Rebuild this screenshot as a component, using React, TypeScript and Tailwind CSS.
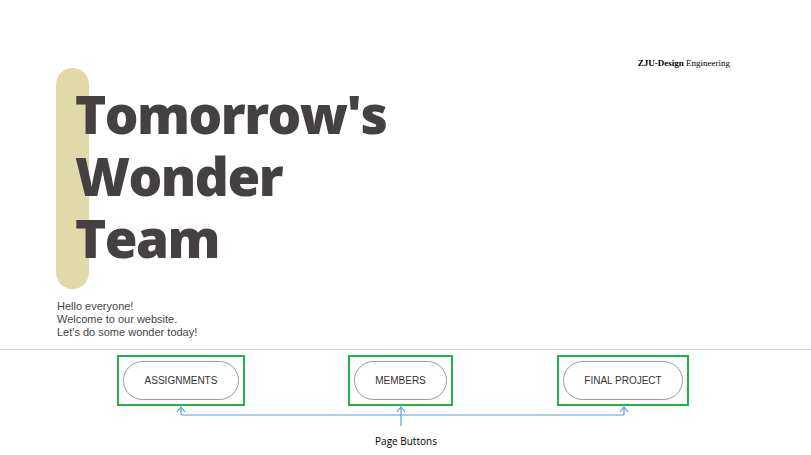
import React from 'react';

const buttons = [
  { label: 'ASSIGNMENTS', pill: 'w-[116px]' },
  { label: 'MEMBERS', pill: 'w-[93px]' },
  { label: 'FINAL PROJECT', pill: 'w-[120px]' },
];

const Arrow: React.FC<{ x: number; bottom: number }> = ({ x, bottom }) => (
  <g>
    <line x1={x} y1={1} x2={x} y2={bottom} />
    <polyline points={`${x - 4},6 ${x},1 ${x + 4},6`} fill="none" />
  </g>
);

const App: React.FC = () => {
  return (
    <div className="w-[811px] h-[455px] bg-white overflow-hidden text-[#454141]">
      <div className="h-[68px] flex items-end justify-end pr-[81px]">
        <p className="text-[9px] leading-[10px] text-black" style={{ fontFamily: '"Liberation Serif", serif' }}>
          <span className="font-bold">ZJU-Design</span> Engineering
        </p>
      </div>

      <div className="relative ml-[56px] h-[221px]">
        <div className="absolute left-0 top-0 w-[33px] h-full rounded-full bg-[#e0d9a8]" />
        <h1
          className="relative pl-[19px] pt-[15px] text-[53px] leading-[62px] font-extrabold text-[#454141] tracking-[-1.5px]"
          style={{ fontFamily: '"Open Sans", sans-serif' }}
        >
          Tomorrow's
          <br />
          Wonder
          <br />
          Team
        </h1>
      </div>

      <div
        className="mt-[11px] pl-[57px] text-[11px] leading-[13px] text-[#444]"
        style={{ fontFamily: '"Liberation Sans", Arial, sans-serif' }}
      >
        <p>Hello everyone!</p>
        <p>Welcome to our website.</p>
        <p>Let's do some wonder today!</p>
      </div>

      <div className="mt-[10px] border-t border-[#cfcfcf]" />

      <div className="mt-[5px] flex pl-[117px] gap-[103px]" style={{ fontFamily: '"Liberation Sans", Arial, sans-serif' }}>
        {buttons.map((b, i) => (
          <div key={b.label} className={`border-2 border-[#22b14c] p-[4px] ${i === 2 ? 'ml-[1px]' : ''}`}>
            <div
              className={`${b.pill} h-[39px] rounded-full border border-[#9a9a9a] flex items-center justify-center text-[10px] text-[#333]`}
            >
              {b.label}
            </div>
          </div>
        ))}
      </div>

      <svg width="811" height="21" className="block" stroke="#5b9bd5" strokeWidth="1.2">
        <Arrow x={181} bottom={9} />
        <Arrow x={401} bottom={20} />
        <Arrow x={624} bottom={9} />
        <line x1={181} y1={9} x2={624} y2={9} />
      </svg>

      <p
        className="mt-[8px] text-center pl-[1px] text-[10px] leading-[12px] text-black"
        style={{ fontFamily: '"Open Sans", sans-serif' }}
      >
        Page Buttons
      </p>
    </div>
  );
};

export default App;
